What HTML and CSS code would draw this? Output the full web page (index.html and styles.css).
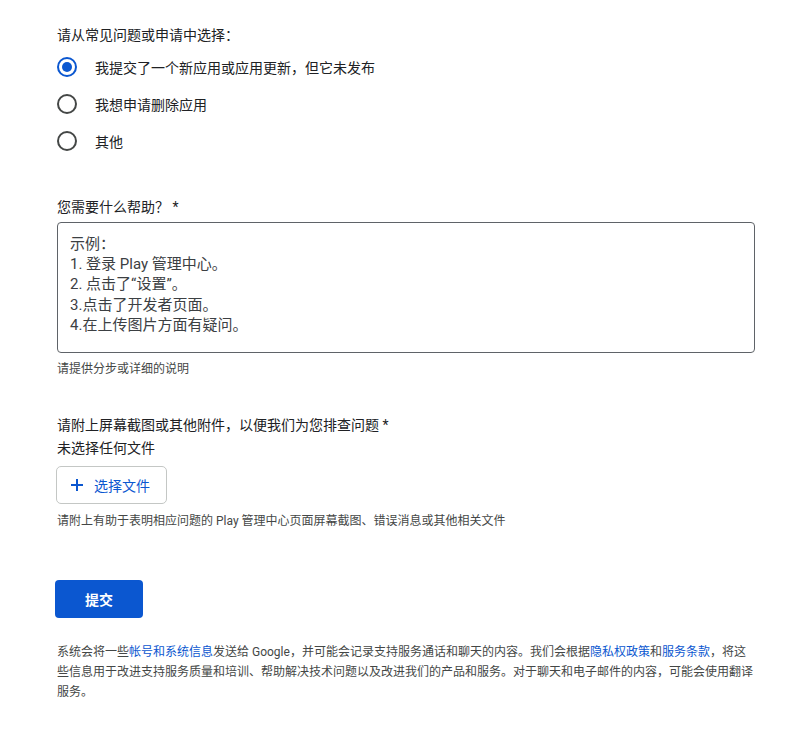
FILE: index.html
```html
<!DOCTYPE html>
<html lang="zh-CN">
<head>
  <meta charset="UTF-8">
  <title>联系支持团队</title>
  <link rel="stylesheet" href="styles.css">
</head>
<body>
  <form class="support-form">

    <div class="field-label">请从常见问题或申请中选择：</div>
    <div class="radio-list">
      <label class="radio-row">
        <input type="radio" name="topic" checked>
        <span class="radio-text">我提交了一个新应用或应用更新，但它未发布</span>
      </label>
      <label class="radio-row">
        <input type="radio" name="topic">
        <span class="radio-text">我想申请删除应用</span>
      </label>
      <label class="radio-row">
        <input type="radio" name="topic">
        <span class="radio-text">其他</span>
      </label>
    </div>

    <div class="field-label section">您需要什么帮助？ *</div>
    <textarea class="details" placeholder="示例：&#10;1. 登录 Play 管理中心。&#10;2. 点击了“设置”。&#10;3.点击了开发者页面。&#10;4.在上传图片方面有疑问。"></textarea>
    <div class="hint">请提供分步或详细的说明</div>

    <div class="field-label section">请附上屏幕截图或其他附件，以便我们为您排查问题 *</div>
    <div class="file-status">未选择任何文件</div>
    <button type="button" class="file-btn">
      <svg width="14" height="14" viewBox="0 0 14 14">
        <path d="M7 1v12M1 7h12" stroke="currentColor" stroke-width="2" fill="none"/>
      </svg>
      <span>选择文件</span>
    </button>
    <div class="hint">请附上有助于表明相应问题的 Play 管理中心页面屏幕截图、错误消息或其他相关文件</div>

    <button type="submit" class="submit-btn">提交</button>

    <p class="disclaimer">系统会将一些<a href="#">帐号和系统信息</a>发送给 Google，并可能会记录支持服务通话和聊天的内容。我们会根据<a href="#">隐私权政策</a>和<a href="#">服务条款</a>，将这些信息用于改进支持服务质量和培训、帮助解决技术问题以及改进我们的产品和服务。对于聊天和电子邮件的内容，可能会使用翻译服务。</p>

  </form>
</body>
</html>
```

FILE: styles.css
```css
html, body {
  margin: 0;
  padding: 0;
  background: #fff;
  font-family: Roboto, "Noto Sans CJK SC", sans-serif;
  color: #202124;
}

.support-form {
  width: 698px;
  padding: 25px 0 40px 57px;
}

.field-label {
  font-size: 14px;
  line-height: 20px;
  color: #202124;
}

.field-label.section {
  margin-top: 38px;
}

.radio-list {
  display: flex;
  flex-direction: column;
  margin-top: 3px;
}

.radio-row {
  display: flex;
  align-items: center;
  gap: 18px;
  height: 37px;
  font-size: 14px;
  cursor: pointer;
}

.radio-row input {
  appearance: none;
  -webkit-appearance: none;
  margin: 0;
  width: 20px;
  height: 20px;
  border: 2px solid #444746;
  border-radius: 50%;
  box-sizing: border-box;
  display: grid;
  place-items: center;
}

.radio-row input:checked {
  border-color: #0b57d0;
}

.radio-row input:checked::after {
  content: "";
  width: 10px;
  height: 10px;
  border-radius: 50%;
  background: #0b57d0;
}

.radio-text {
  color: #202124;
}

/* multi-line example text sits in the placeholder */
.details {
  display: block;
  width: 100%;
  height: 131px;
  box-sizing: border-box;
  margin-top: 5px;
  padding: 11px 12px 10px;
  border: 1px solid #5f6368;
  border-radius: 4px;
  font-family: inherit;
  font-size: 15px;
  line-height: 20.2px;
  resize: none;
}

.details::placeholder {
  color: #3c4043;
  opacity: 1;
}

.hint {
  margin-top: 8px;
  font-size: 12px;
  line-height: 16px;
  color: #444746;
}

.file-status {
  margin-top: 3px;
  font-size: 14px;
  line-height: 20px;
  color: #202124;
}

.file-btn {
  display: flex;
  align-items: center;
  gap: 10px;
  margin-top: 8px;
  margin-left: -1px;
  height: 38px;
  padding: 0 16px 0 13px;
  background: #fff;
  border: 1px solid #c4c7c5;
  border-radius: 5px;
  font-family: inherit;
  font-size: 14px;
  color: #0b57d0;
}

.file-btn svg {
  display: block;
}

.file-btn + .hint {
  margin-top: 9px;
}

.submit-btn {
  display: block;
  margin-top: 51px;
  margin-left: -2px;
  width: 88px;
  height: 38px;
  border: none;
  border-radius: 4px;
  background: #0b57d0;
  color: #fff;
  font-family: inherit;
  font-size: 14px;
  font-weight: bold;
}

.disclaimer {
  margin: 24px 0 0;
  font-size: 12px;
  line-height: 20px;
  color: #444746;
}

.disclaimer a {
  color: #0b57d0;
  text-decoration: none;
}
```
